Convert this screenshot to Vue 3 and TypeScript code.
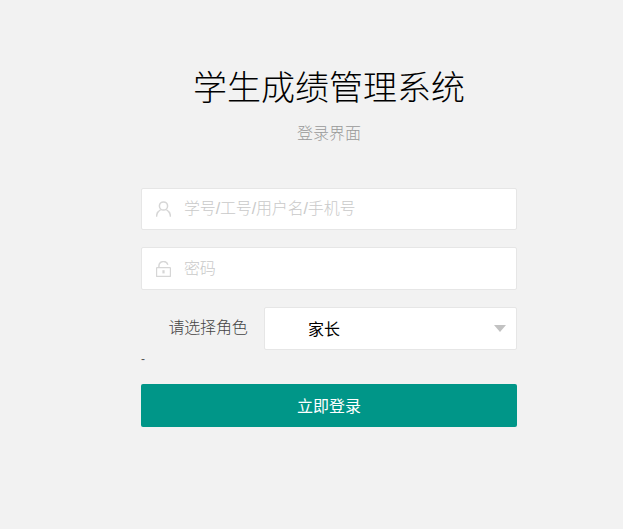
<script setup lang="ts">
const title = '学生成绩管理系统'
const subtitle = '登录界面'
const role = '家长'
</script>

<template>
  <main class="page">
    <header class="head">
      <h1 class="title">{{ title }}</h1>
      <p class="sub">{{ subtitle }}</p>
    </header>
    <form class="form" @submit.prevent>
      <label class="field">
        <svg class="icon" viewBox="0.5 0 15 16" fill="none" stroke="#d6d6d6" stroke-width="1.5">
          <circle cx="8" cy="5" r="4.1" />
          <path d="M1 15.8c.2-3.6 2-6 4-7M15 15.8c-.2-3.6-2-6-4-7" />
        </svg>
        <input class="input" type="text" placeholder="学号/工号/用户名/手机号" />
      </label>
      <label class="field">
        <svg class="icon" viewBox="0.5 0 15 16" fill="none" stroke="#d6d6d6" stroke-width="1.4">
          <path d="M3.4 6.4V5A4.6 4.6 0 0 1 12.4 3.8" />
          <rect x="1" y="6.6" width="14" height="8.8" rx=".6" />
          <path d="M8 9.2v3.2" stroke-width="2.2" />
        </svg>
        <input class="input" type="password" placeholder="密码" />
      </label>
      <div class="role">
        <span class="role-label">请选择角色</span>
        <div class="select">
          <span class="select-value">{{ role }}</span>
          <span class="caret"></span>
        </div>
      </div>
      <div class="dash">-</div>
      <button class="submit" type="submit">立即登录</button>
    </form>
  </main>
</template>

<style>
html, body { margin: 0; background: #f2f2f2; }
</style>

<style scoped>
.page {
  height: 529px;
  box-sizing: border-box;
  padding-top: 65px;
  font-family: "Liberation Sans", "Noto Sans CJK SC", sans-serif;
  overflow: hidden;
}
.head { text-align: center; margin-left: 35px; }
.title {
  margin: 0;
  font-size: 34px;
  line-height: 46px;
  font-weight: 300;
  color: #000;
}
.sub {
  margin: 11.5px 0 0;
  font-size: 16px;
  line-height: 22px;
  font-weight: 300;
  color: #999;
}
.form {
  width: 376px;
  margin: 43.4px 0 0 141px;
  display: flex;
  flex-direction: column;
}
.field {
  height: 42.5px;
  box-sizing: border-box;
  margin-bottom: 17px;
  background: #fff;
  border: 1px solid #e6e6e6;
  border-radius: 2px;
  display: flex;
  align-items: center;
  padding-left: 14px;
}
.icon { width: 15px; height: 16px; flex: none; }
.input {
  flex: 1;
  min-width: 0;
  margin-left: 13px;
  border: 0;
  outline: 0;
  padding: 0;
  background: transparent;
  font: 300 16px "Liberation Sans", "Noto Sans CJK SC", sans-serif;
  letter-spacing: -0.15px;
  color: #333;
}
.input::placeholder { color: #c9c9c9; }
.role { display: flex; align-items: center; height: 43px; }
.role-label {
  width: 123px;
  flex: none;
  box-sizing: border-box;
  padding-left: 27.5px;
  font-size: 16px;
  font-weight: 300;
  letter-spacing: -0.2px;
  color: #444;
  position: relative;
  top: -2px;
}
.select {
  flex: 1;
  height: 100%;
  box-sizing: border-box;
  background: #fff;
  border: 1px solid #e6e6e6;
  border-radius: 2px;
  display: flex;
  align-items: center;
  justify-content: space-between;
  padding: 0 10px 0 43px;
}
.select-value { font-size: 16px; font-weight: 400; color: #000; }
.caret {
  width: 0;
  height: 0;
  border-style: solid;
  border-width: 7px 6.5px 0;
  border-color: #c2c2c2 transparent transparent;
}
.dash {
  height: 34px;
  font-size: 12px;
  line-height: 18px;
  color: #555;
}
.submit {
  height: 43px;
  border: 0;
  border-radius: 2px;
  background: #009688;
  color: #fff;
  font: 400 16px "Liberation Sans", "Noto Sans CJK SC", sans-serif;
  padding: 0;
}
</style>
